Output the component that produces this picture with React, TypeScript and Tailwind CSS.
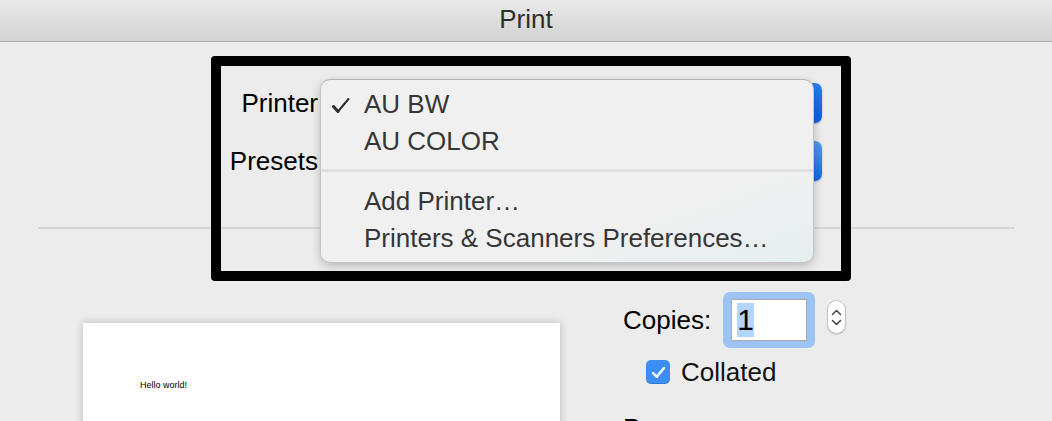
import React from "react"

const font = { fontFamily: '"Liberation Sans", Arial, sans-serif' }

const MenuItem: React.FC<{ label: string; checked?: boolean }> = ({ label, checked }) => (
  <div className="relative flex h-[37px] items-center pl-[43px] text-[26px] leading-none text-[#363636]">
    {checked ? (
      <svg className="absolute left-[11px] top-[12px]" width="18" height="15" viewBox="0 0 18 15" fill="none" stroke="#2e2e2e" strokeLinecap="round" strokeLinejoin="round">
        <path d="M1.5 8.5 L6 13.5" strokeWidth="3" />
        <path d="M6 13.5 L16.5 1" strokeWidth="2" />
      </svg>
    ) : null}
    <span>{label}</span>
  </div>
)

const PrinterMenu = () => (
  <div className="absolute left-[320px] top-[79px] flex h-[184px] w-[494px] flex-col rounded-[10px] border border-[#c4c4c4] border-t-[#b4b4b4] bg-gradient-to-br from-[#f0f0f0] via-[#f0f0f0] via-70% to-[#e6eef0] py-[6px] shadow-[0_3px_10px_rgba(0,0,0,0.22)]">
    <MenuItem label="AU BW" checked />
    <MenuItem label="AU COLOR" />
    <div className="flex h-[24px] items-center">
      <div className="h-[3px] w-full bg-[#e0e0e0]" />
    </div>
    <MenuItem label="Add Printer…" />
    <MenuItem label="Printers & Scanners Preferences…" />
  </div>
)

const PopupRow: React.FC<{ label: string; light?: boolean }> = ({ label, light }) => (
  <div className="flex h-[40px] items-center">
    <div className="w-[318px] text-right text-[26px] leading-none text-black">{label}</div>
    <div className="ml-[6px] flex h-[40px] w-[498px] overflow-hidden rounded-[7px] bg-white shadow-[0_1px_2px_rgba(0,0,0,0.25)]">
      <div className="flex-1" />
      <div
        className={
          light
            ? "w-[40px] bg-gradient-to-b from-[#5a98ea] to-[#1064e6]"
            : "w-[40px] bg-gradient-to-b from-[#2a7ef0] to-[#0c5ddf]"
        }
      />
    </div>
  </div>
)

const Stepper = () => (
  <div className="ml-[12px] mb-[6px] flex h-[34px] w-[19px] flex-col items-center justify-center gap-[3px] rounded-full border border-[#c2c2c2] bg-white shadow-[0_1px_1px_rgba(0,0,0,0.12)]">
    <svg width="11" height="7" viewBox="0 0 11 7" fill="none" stroke="#4a4a4a" strokeWidth="1.6" strokeLinecap="round" strokeLinejoin="round">
      <path d="M1.5 5.5 L5.5 1.5 L9.5 5.5" />
    </svg>
    <svg width="11" height="7" viewBox="0 0 11 7" fill="none" stroke="#4a4a4a" strokeWidth="1.6" strokeLinecap="round" strokeLinejoin="round">
      <path d="M1.5 1.5 L5.5 5.5 L9.5 1.5" />
    </svg>
  </div>
)

export default function App() {
  return (
    <div className="relative h-[421px] w-[1052px] overflow-hidden bg-[#ececec]" style={font}>
      <div className="flex h-[42px] items-center justify-center border-b border-[#afafaf] bg-gradient-to-b from-[#e9e9e9] to-[#d3d3d3] pb-[2px] text-[26px] text-[#2e2e2e]">
        Print
      </div>

      <div className="flex flex-col gap-[18px] pt-[41px]">
        <PopupRow label="Printer" />
        <PopupRow label="Presets" light />
      </div>

      <div className="mx-[38px] mt-[46px] h-[2px] bg-[#d5d5d5]" />

      <div className="flex">
        <div className="ml-[83px] mt-[94px] h-[200px] w-[477px] bg-white shadow-[0_0_8px_rgba(0,0,0,0.22)]">
          <div className="pl-[57px] pt-[58px] text-[9px] leading-none text-black">Hello world!</div>
        </div>

        <div className="ml-[63px] mt-[63px] flex flex-col">
          <div className="flex items-center">
            <span className="mb-[1px] text-[26px] leading-none text-black">Copies:</span>
            <div className="ml-[12px] rounded-[7px] bg-[#9cc3f3] px-[8px] py-[7px]">
              <div className="flex h-[42px] w-[76px] items-center border border-[#a9a9a9] bg-white pl-[5px]">
                <span className="bg-[#b4d6fe] text-[30px] leading-[34px] text-black">1</span>
              </div>
            </div>
            <Stepper />
          </div>

          <div className="ml-[23px] mt-[11px] flex items-center">
            <div className="flex h-[24px] w-[24px] items-center justify-center rounded-[5px] bg-[#3a8ef6] shadow-[inset_0_-1px_0_rgba(0,0,0,0.15)]">
              <svg width="15" height="13" viewBox="0 0 15 13" fill="none" stroke="white" strokeWidth="2.4" strokeLinecap="round" strokeLinejoin="round">
                <path d="M2 7 L5.8 10.8 L13 2" />
              </svg>
            </div>
            <span className="ml-[11px] text-[26px] leading-none text-[#111]">Collated</span>
          </div>

          <div className="mt-[30px] text-[26px] leading-none text-black">Pages:</div>
        </div>
      </div>

      <PrinterMenu />

      <div className="absolute left-[211px] top-[56px] h-[225px] w-[640px] rounded-[4px] border-[10px] border-black" />
    </div>
  )
}
